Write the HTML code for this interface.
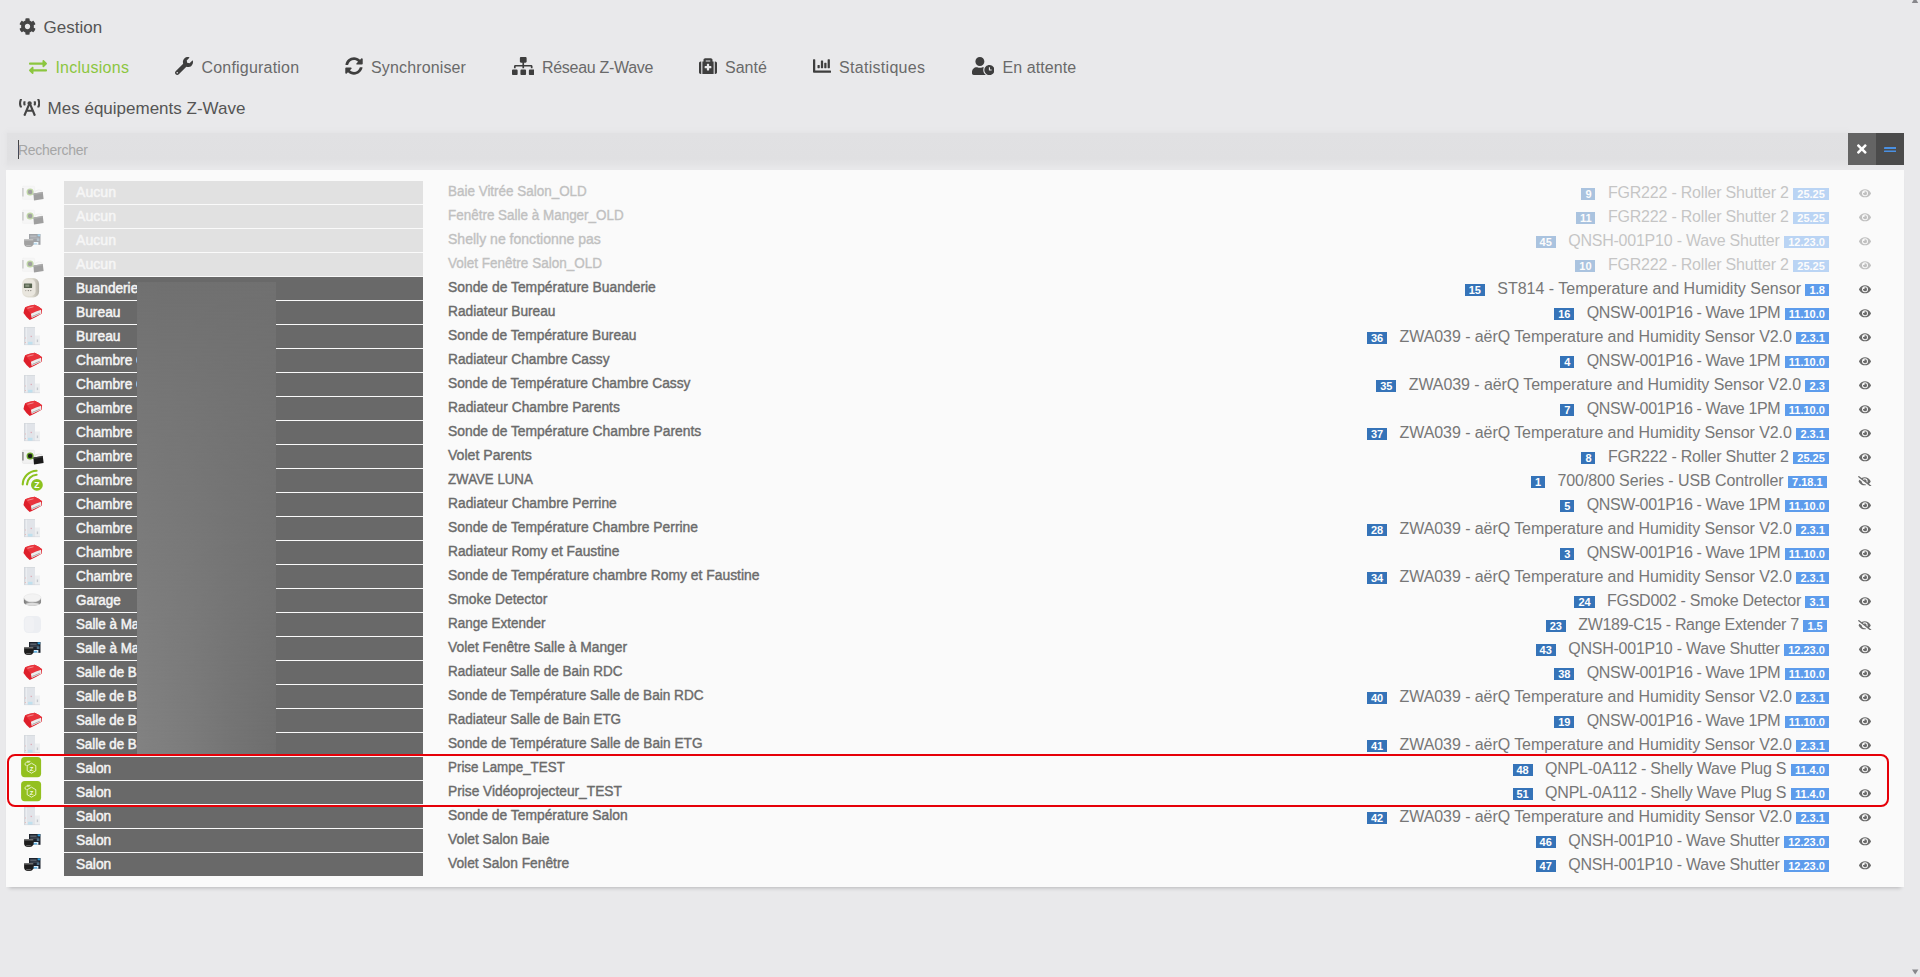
<!DOCTYPE html>
<html lang="fr">
<head>
<meta charset="utf-8">
<title>Z-Wave JS</title>
<style>
*{box-sizing:border-box;margin:0;padding:0}
html,body{width:1920px;height:977px;overflow:hidden}
body{background:#e9e9eb;font-family:"Liberation Sans",sans-serif;color:#555;position:relative}
.abs{position:absolute}
.legend{position:absolute;left:19px;top:16px;height:22px;line-height:22px;font-size:17px;color:#555;white-space:nowrap}
.legend svg{position:absolute;left:0;top:2px;width:17px;height:17px;fill:#454545}
.legend span{position:absolute;left:24.6px;top:1px}
.tab{position:absolute;top:56px;height:22px;line-height:22px;font-size:16px;color:#6a6a6a;white-space:nowrap}
.tab svg{position:absolute;top:1px;fill:#3e3e3e}
.tab span{top:1px}
.tab.act{color:#8cc63f}
.tab.act svg{fill:#8cc63f}
.search{position:absolute;left:7px;top:133px;width:1841px;height:32px;background:linear-gradient(180deg,#e1e1e3 0,#e0e0e2 80%,#e4e4e6 100%);box-shadow:0 0 4px 2px #e4e4e6}
.search span{position:absolute;left:11px;top:1px;line-height:33px;font-size:14px;color:#a6a6a6;letter-spacing:-.27px}
.search i{position:absolute;left:11px;top:7px;width:1px;height:19px;background:#444}
.btn{position:absolute;top:133px;width:28px;height:32px}
.btn svg{position:absolute}
.panel{position:absolute;left:6.2px;top:169.6px;width:1897.8px;height:717px;background:#fafafa;box-shadow:0 4px 4px -3px rgba(0,0,0,.22)}
.row{position:absolute;left:7px;width:1897px;height:24px;white-space:nowrap}
.row .ico{position:absolute;left:13px;top:0}
.row .lab{position:absolute;left:57px;top:1px;width:359px;height:23px;background:#696969;color:#f4f4f4;font-weight:bold;font-size:14px;line-height:22px;padding-left:12px;overflow:hidden}
.row .nm{position:absolute;left:441px;top:0;font-weight:normal;-webkit-text-stroke:.4px;font-size:14px;line-height:22px;color:#6b6b6b;transform:scaleX(.983);transform-origin:0 50%}
.row .rt{position:absolute;right:75px;top:1px;font-size:16px;line-height:24px;color:#777}
.row .nid,.row .ver{display:inline-block;font-size:11px;font-weight:bold;color:#fff;line-height:12.6px;height:12px;padding:0 4.15px;vertical-align:0;letter-spacing:0}
.row .rt.sl{right:77.2px}
.m0{letter-spacing:-0.200px}
.m1{letter-spacing:-0.227px}
.m2{letter-spacing:-0.003px}
.m3{letter-spacing:-0.382px}
.m4{letter-spacing:-0.070px}
.m5{letter-spacing:-0.081px}
.m6{letter-spacing:-0.254px}
.m7{letter-spacing:-0.318px}
.m8{letter-spacing:-0.223px}
.row .nid{background:#3573b8;margin-right:12.4px;padding:0 3.95px}
.row .ver{background:#5d9cec}
.row .eye{position:absolute;left:1852px;top:7.7px;width:12px;height:10.67px;fill:#6b6b6b}
.row .eye[viewBox="0 0 640 512"]{left:1851.3px;width:13.33px}
.row.dis .ico,.row.dis .nm,.row.dis .rt,.row.dis .eye{opacity:.4}
.row .lab b{display:inline-block;font-weight:normal;-webkit-text-stroke:.5px;transform-origin:0 50%}
.row.dis .lab{background:#e1e1e1;color:#f6f6f6}
.redact{position:absolute;left:137px;top:281.5px;width:139px;height:472.5px;background:linear-gradient(180deg,#707070 0%,rgba(114,114,114,.75) 22%,rgba(118,118,118,.4) 65%,rgba(118,118,118,0) 100%),linear-gradient(90deg,#828282 0%,#808080 12%,#7b7b7b 40%,#747474 68%,#6e6e6e 100%)}
.hl{position:absolute;left:7.2px;top:754.3px;width:1882px;height:52.5px;border:2.1px solid #e60008;border-radius:8px}
</style>
</head>
<body>
<svg width="0" height="0" style="position:absolute">
<defs>
<path id="i-eye" d="M572.52 241.4C518.29 135.59 410.93 64 288 64S57.68 135.64 3.48 241.41a32.35 32.35 0 0 0 0 29.19C57.71 376.41 165.07 448 288 448s230.32-71.64 284.52-177.41a32.35 32.35 0 0 0 0-29.19zM288 400a144 144 0 1 1 144-144 143.93 143.93 0 0 1-144 144zm0-240a95.31 95.31 0 0 0-25.31 3.79 47.85 47.85 0 0 1-66.9 66.9A95.78 95.78 0 1 0 288 160z"/>
<path id="i-slash" d="M320 400c-75.85 0-137.25-58.710-142.900-133.110L72.200 185.820c-13.790 17.300-26.480 35.590-36.720 55.590a32.350 32.350 0 0 0 0 29.190C89.710 376.410 197.070 448 320 448c26.910 0 52.870-4 77.890-10.460L346 397.390a144.130 144.130 0 0 1-26 2.610zm313.820 58.100l-110.550-85.440a331.250 331.250 0 0 0 81.250-102.070 32.350 32.350 0 0 0 0-29.190C550.290 135.590 442.930 64 320 64a308.150 308.150 0 0 0-147.320 37.700L45.460 3.370A16 16 0 0 0 23 6.180L3.370 31.450A16 16 0 0 0 6.180 53.900l588.360 454.730a16 16 0 0 0 22.460-2.810l19.640-25.270a16 16 0 0 0-2.820-22.450zm-183.720-142l-39.300-30.380A94.750 94.750 0 0 0 416 256a94.760 94.760 0 0 0-121.310-92.210A47.650 47.650 0 0 1 304 192a46.640 46.640 0 0 1-1.540 10l-73.610-56.890A142.310 142.310 0 0 1 320 112a143.920 143.920 0 0 1 144 144c0 21.630-5.290 41.790-13.900 60.110z"/>
<linearGradient id="g-st" x1="0" x2="1" y1="0" y2="0"><stop offset="0" stop-color="#e6e3da"/><stop offset=".6" stop-color="#dedbd1"/><stop offset="1" stop-color="#b3b0a6"/></linearGradient>
<linearGradient id="g-sm" x1="0" x2="1" y1="0" y2="0"><stop offset="0" stop-color="#7a7a7a"/><stop offset=".35" stop-color="#a9a9a9"/><stop offset="1" stop-color="#8a8a8a"/></linearGradient>
<g id="i-fgr"><rect x="2.4" y="6.2" width="12.2" height="13.2" rx="1.2" fill="#f1f1f1" stroke="#e3e3e3" stroke-width=".6"/><rect x="2.5" y="8" width=".9" height="8.5" fill="#444"/><circle cx="10.1" cy="12" r="2.9" fill="#1b1b1b" stroke="#6aa52a" stroke-width="1.3"/><path d="M14.6 12.6C16 9.5 21 9 22.6 12" fill="none" stroke="#e4e4e4" stroke-width="1.2"/><path d="M13.4 13.6l9.4-1.6.8 7-9.6 1.6z" fill="#1a1a1a"/><path d="M13.4 13.6l9.4-1.6.1 1.2-9.4 1.7z" fill="#3c3c3c"/></g>
<g id="i-shut"><rect x="9" y="6" width="11.5" height="10.8" fill="#1c222c"/><rect x="17.6" y="6.3" width="2.6" height="2" fill="#2f9ad6"/><rect x="10.2" y="7.6" width="6.4" height="1" fill="#7c8590"/><rect x="10.2" y="9.6" width="8.5" height=".9" fill="#56606c"/><rect x="16.8" y="10.4" width="2.6" height="2.6" fill="#4f6f86"/><rect x="13.6" y="14" width="4.8" height="2.8" fill="#d9ecf8"/><rect x="13.6" y="15.2" width="3.4" height="1.2" fill="#46a6de"/><path d="M4.100 11.500h9.300v3.900c0 2-1.600 3.500-3.600 3.500H7.700c-2 0-3.600-1.500-3.600-3.500z" fill="#1d1d1d"/><rect x="4.100" y="11" width="9.300" height="1.500" rx=".5" fill="#707070"/><rect x="6.200" y="17.400" width="4.600" height=".8" fill="#8a8a8a"/></g>
<g id="i-st814"><rect x="2.1" y="2.1" width="17" height="19.3" rx="6" fill="url(#g-st)"/><rect x="3" y="3.400" width="12.500" height="16.500" rx="4.500" fill="#e9e6de"/><rect x="3.9" y="7.5" width="8.2" height="4.5" rx=".5" fill="#57634f"/><rect x="5.300" y="8.600" width="4" height="2.200" fill="#8a9680"/><circle cx="5.800" cy="14.600" r=".6" fill="#9a978f"/><circle cx="8.300" cy="14.600" r=".6" fill="#77746c"/><circle cx="10.800" cy="14.600" r=".6" fill="#77746c"/></g>
<g id="i-red"><path d="M5.200 7.200Q9.500 5.600 14.600 4.800Q19 6.500 22.100 9.300L21.600 13.800Q15.500 17.500 9.700 19.950Q6 17 3.500 13Q4 9.500 5.200 7.200z" fill="#de1f2a"/><path d="M5.200 7.200Q9.500 5.600 14.600 4.800Q19 6.500 22.100 9.300Q16 11 10.900 13.800Q7.500 10 5.200 7.200z" fill="#e9343c"/><path d="M10.900 13.800Q16 11 21.100 9.700L21.100 13.800Q16.500 15.600 11.700 17.900z" fill="#ececec"/><path d="M12.600 16.300l7.800-3.300" stroke="#666" stroke-width=".9" stroke-dasharray="1.100 1"/><path d="M7.500 8.300l6-1.500" stroke="#f7b0b3" stroke-width=".7"/></g>
<g id="i-aerq"><rect x="4.100" y="3" width="10.900" height="18" fill="#e1e4e9"/><rect x="4.100" y="3" width=".8" height="18" fill="#cfd3d9"/><rect x="4.100" y="3" width="10.900" height=".7" fill="#d3d7dc"/><rect x="15" y="11.500" width="4.900" height="9.500" fill="#eceef0"/><rect x="6" y="3.700" width=".7" height="17.300" fill="#f0f2f5"/><rect x="8" y="17.800" width="4.500" height="3.200" fill="#bfe0ee"/><rect x="10.600" y="11.800" width="1.300" height="1.300" fill="#dfa9b4"/><rect x="4.900" y="13.500" width="1" height="1" fill="#e6b9b9"/><rect x="4.900" y="18" width="1" height="1" fill="#e6b9b9"/><rect x="16.800" y="15.500" width="1.300" height="2.600" fill="#c4c8ce"/><rect x="4.100" y="20.500" width="15.800" height=".6" fill="#d5d8dd"/></g>
<g id="i-luna"><path d="M2.700 16.400A14.300 14.300 0 0 1 16.600 2.700" fill="none" stroke="#8dc21f" stroke-width="2.100" stroke-linecap="round"/><path d="M7 16.400A10 10 0 0 1 16.600 6.800" fill="none" stroke="#8dc21f" stroke-width="2.100" stroke-linecap="round"/><circle cx="16.900" cy="16.900" r="5.900" fill="#8dc21f"/><text x="16.900" y="20" font-family="Liberation Sans,sans-serif" font-weight="bold" font-size="8.600" text-anchor="middle" fill="#fff">Z</text></g>
<g id="i-smoke"><ellipse cx="12.450" cy="14" rx="8.600" ry="4" fill="#d9d9d9"/><path d="M3.850 10v4.200c0 2 3.900 3.300 8.600 3.300s8.600-1.300 8.600-3.300V10z" fill="url(#g-sm)"/><ellipse cx="12.450" cy="16.300" rx="7" ry="1.500" fill="#dcdcdc"/><ellipse cx="12.450" cy="9.800" rx="8.600" ry="4" fill="#f3f3f3" stroke="#e2e2e2" stroke-width=".5"/></g>
<g id="i-range"><rect x="3.800" y="4" width="17.200" height="17" rx="4.500" fill="#eceef2"/><rect x="5" y="5" width="9" height="15" rx="3.500" fill="#f0f1f4"/></g>
<g id="i-plug"><rect x="1.100" y="1" width="20" height="20.200" rx="3.600" fill="#93c01f"/><g fill="none" stroke="#f3f9e1" stroke-width=".85"><path d="M11.500 7.200l4.300 2.500v5l-4.300 2.500-4.300-2.500v-5z"/><path d="M9.500 6.200h-3l-1.800 1.600 1.700 2.200M7 5.300h3.400"/></g><text x="11.600" y="14.600" font-family="Liberation Sans,sans-serif" font-weight="bold" font-size="6" text-anchor="middle" fill="#f6fbe8">Z</text></g>
</defs>
</svg>

<div class="legend"><svg viewBox="0 0 512 512"><path d="M487.4 315.7l-42.6-24.6c4.3-23.2 4.3-47 0-70.2l42.6-24.6c4.9-2.8 7.1-8.6 5.5-14-11.1-35.6-30-67.8-54.7-94.600-3.800-4.100-10-5.100-14.800-2.300L380.800 110c-17.900-15.400-38.500-27.300-60.800-35.100V25.800c0-5.600-3.900-10.500-9.400-11.700-36.700-8.200-74.300-7.800-109.200 0-5.500 1.200-9.400 6.100-9.400 11.700V75c-22.200 7.900-42.800 19.800-60.800 35.100L88.700 85.500c-4.900-2.800-11-1.900-14.800 2.300-24.700 26.700-43.600 58.900-54.700 94.600-1.700 5.400.6 11.200 5.500 14L67.300 221c-4.300 23.200-4.300 47 0 70.200l-42.600 24.600c-4.900 2.800-7.100 8.600-5.500 14 11.100 35.600 30 67.800 54.700 94.600 3.800 4.100 10 5.100 14.800 2.300l42.600-24.600c17.900 15.400 38.500 27.300 60.800 35.100v49.200c0 5.600 3.900 10.500 9.400 11.700 36.700 8.200 74.300 7.800 109.200 0 5.500-1.200 9.400-6.100 9.400-11.700v-49.200c22.200-7.900 42.800-19.800 60.800-35.100l42.600 24.600c4.900 2.800 11 1.900 14.800-2.300 24.700-26.700 43.600-58.900 54.700-94.600 1.500-5.500-.7-11.300-5.600-14.100zM256 336c-44.100 0-80-35.900-80-80s35.900-80 80-80 80 35.900 80 80-35.900 80-80 80z"/></svg><span>Gestion</span></div>

<div class="tab act" style="left:28px"><svg viewBox="0 0 512 512" style="left:.8px;top:1.6px;width:18.0px;height:18px" fill-rule="evenodd"><path d="M0 168v-16c0-13.255 10.745-24 24-24h360V80c0-21.367 25.899-32.042 40.971-16.971l80 80c9.372 9.373 9.372 24.569 0 33.941l-80 80C409.956 271.982 384 261.456 384 240v-48H24c-13.255 0-24-10.745-24-24zm488 152H128v-48c0-21.314-25.862-32.08-40.971-16.971l-80 80c-9.372 9.373-9.372 24.569 0 33.941l80 80C102.057 463.997 128 453.437 128 432v-48h360c13.255 0 24-10.745 24-24v-16c0-13.255-10.745-24-24-24z"/></svg><span style="position:absolute;left:27.4px;letter-spacing:0.26px">Inclusions</span></div>
<div class="tab " style="left:175px"><svg viewBox="0 0 512 512" style="left:0;width:18.0px;height:18px" fill-rule="evenodd"><path d="M507.73 109.1c-2.24-9.03-13.54-12.09-20.12-5.51l-74.36 74.36-67.88-11.31-11.31-67.88 74.36-74.36c6.62-6.62 3.43-17.9-5.66-20.16-47.38-11.74-99.55.91-136.58 37.93-39.64 39.64-50.55 97.1-34.05 147.2L18.74 402.760c-24.990 24.990-24.990 65.510 0 90.500 24.990 24.990 65.510 24.990 90.500 0l213.210-213.210c50.120 16.710 107.470 5.680 147.370-34.220 37.070-37.070 49.700-89.320 37.910-136.730zM64 472c-13.250 0-24-10.750-24-24 0-13.260 10.750-24 24-24s24 10.740 24 24c0 13.250-10.750 24-24 24z"/></svg><span style="position:absolute;left:26.5px;letter-spacing:0.2px">Configuration</span></div>
<div class="tab " style="left:344.5px"><svg viewBox="0 0 512 512" style="left:0;width:18.0px;height:18px" fill-rule="evenodd"><path d="M370.72 133.28C339.458 104.008 298.888 87.962 255.848 88c-77.458.068-144.328 53.178-162.791 126.85-1.344 5.363-6.122 9.15-11.651 9.15H24.103c-7.498 0-13.194-6.807-11.807-14.176C33.933 94.924 134.813 8 256 8c66.448 0 126.791 26.136 171.315 68.685L463.03 40.97C478.149 25.851 504 36.559 504 57.941V192c0 13.255-10.745 24-24 24H345.941c-21.382 0-32.09-25.851-16.971-40.971l41.75-41.749zM32 296h134.059c21.382 0 32.09 25.851 16.971 40.971l-41.75 41.75c31.262 29.273 71.835 45.319 114.876 45.28 77.418-.07 144.315-53.144 162.787-126.849 1.344-5.363 6.122-9.15 11.651-9.15h57.304c7.498 0 13.194 6.807 11.807 14.176C478.067 417.076 377.187 504 256 504c-66.448 0-126.791-26.136-171.315-68.685L48.97 471.03C33.851 486.149 8 475.441 8 454.059V320c0-13.255 10.745-24 24-24z"/></svg><span style="position:absolute;left:26.5px;letter-spacing:0.14px">Synchroniser</span></div>
<div class="tab " style="left:511.5px"><svg viewBox="0 0 640 512" style="left:0;width:22.5px;height:18px" fill-rule="evenodd"><path d="M128 352H32c-17.67 0-32 14.33-32 32v96c0 17.67 14.33 32 32 32h96c17.67 0 32-14.33 32-32v-96c0-17.67-14.33-32-32-32zm-24-80h192v48h48v-48h192v48h48v-57.59c0-21.17-17.23-38.41-38.41-38.41H344v-64h40c17.67 0 32-14.33 32-32V32c0-17.67-14.33-32-32-32H256c-17.67 0-32 14.33-32 32v96c0 17.67 14.33 32 32 32h40v64H94.41C73.23 224 56 241.23 56 262.41V320h48v-48zm264 80h-96c-17.67 0-32 14.33-32 32v96c0 17.67 14.33 32 32 32h96c17.67 0 32-14.33 32-32v-96c0-17.670-14.330-32-32-32zm240 0h-96c-17.670 0-32 14.330-32 32v96c0 17.670 14.330 32 32 32h96c17.670 0 32-14.330 32-32v-96c0-17.670-14.330-32-32-32z"/></svg><span style="position:absolute;left:30.5px;letter-spacing:-0.3px">Réseau Z-Wave</span></div>
<div class="tab " style="left:698.5px"><svg viewBox="0 0 512 512" style="left:0;width:18.0px;height:18px" fill-rule="evenodd"><path d="M96 480h320V128h-32V80c0-26.51-21.49-48-48-48H176c-26.51 0-48 21.49-48 48v48H96v352zm96-384h128v32H192V96zm320 80v256c0 26.51-21.49 48-48 48h-16V128h16c26.51 0 48 21.49 48 48zM64 480H48c-26.51 0-48-21.49-48-48V176c0-26.51 21.49-48 48-48h16v352zm288-208v32c0 8.837-7.163 16-16 16h-48v48c0 8.837-7.163 16-16 16h-32c-8.837 0-16-7.163-16-16v-48h-48c-8.837 0-16-7.163-16-16v-32c0-8.837 7.163-16 16-16h48v-48c0-8.837 7.163-16 16-16h32c8.837 0 16 7.163 16 16v48h48c8.837 0 16 7.163 16 16z"/></svg><span style="position:absolute;left:26.5px;letter-spacing:0px">Santé</span></div>
<div class="tab " style="left:812.5px"><svg viewBox="0 0 512 512" style="left:0;width:18.0px;height:18px" fill-rule="evenodd"><path d="M332.8 320h38.4c6.4 0 12.8-6.4 12.8-12.8V172.8c0-6.4-6.4-12.8-12.8-12.8h-38.4c-6.4 0-12.8 6.4-12.8 12.8v134.4c0 6.4 6.4 12.8 12.8 12.8zm96 0h38.4c6.4 0 12.8-6.4 12.8-12.8V76.8c0-6.4-6.4-12.8-12.8-12.8h-38.4c-6.4 0-12.8 6.4-12.8 12.8v230.4c0 6.4 6.4 12.8 12.8 12.8zm-288 0h38.4c6.4 0 12.8-6.4 12.8-12.8v-70.4c0-6.4-6.4-12.8-12.8-12.8h-38.4c-6.4 0-12.8 6.4-12.8 12.8v70.4c0 6.4 6.4 12.8 12.8 12.8zm96 0h38.4c6.4 0 12.8-6.4 12.8-12.8V108.8c0-6.4-6.4-12.8-12.8-12.8h-38.4c-6.4 0-12.8 6.4-12.8 12.8v198.4c0 6.4 6.4 12.8 12.8 12.8zM496 384H64V80c0-8.84-7.16-16-16-16H16C7.16 64 0 71.16 0 80v336c0 17.67 14.33 32 32 32h464c8.840 0 16-7.160 16-16v-32c0-8.840-7.160-16-16-16z"/></svg><span style="position:absolute;left:26.5px;letter-spacing:0.3px">Statistiques</span></div>
<div class="tab " style="left:971.5px"><svg viewBox="0 0 640 512" style="left:0;width:22.5px;height:18px" fill-rule="evenodd"><path d="M496 224c-79.6 0-144 64.4-144 144s64.4 144 144 144 144-64.4 144-144-64.4-144-144-144zm64 150.3c0 5.3-4.4 9.7-9.7 9.700h-60.600c-5.300 0-9.700-4.400-9.700-9.700v-76.600c0-5.300 4.400-9.700 9.700-9.700h12.600c5.300 0 9.700 4.400 9.700 9.700V352h38.300c5.300 0 9.700 4.400 9.700 9.700v12.600zM320 368c0-27.800 6.700-54.100 18.200-77.500-8-1.500-16.200-2.500-24.600-2.500h-16.700c-22.200 10.200-46.900 16-72.900 16s-50.600-5.800-72.900-16h-16.700C60.200 288 0 348.200 0 422.400V464c0 26.500 21.500 48 48 48h347.100c-45.300-31.900-75.100-84.500-75.100-144zm-96-112c70.700 0 128-57.300 128-128S294.700 0 224 0 96 57.300 96 128s57.300 128 128 128z"/></svg><span style="position:absolute;left:31.0px;letter-spacing:0.07px">En attente</span></div>

<div class="legend" style="top:97px"><svg viewBox="0 0 640 512" style="left:0;top:2px;width:21.25px;height:17px" fill-rule="evenodd"><path d="M150.94 192h33.73c11.01 0 18.61-10.83 14.86-21.18-4.93-13.58-7.55-27.98-7.55-42.82s2.62-29.24 7.55-42.82C203.29 74.83 195.68 64 184.67 64h-33.73c-7.01 0-13.46 4.49-15.41 11.23C130.64 92.21 128 109.88 128 128c0 18.12 2.64 35.79 7.54 52.76 1.94 6.74 8.39 11.24 15.4 11.24zM89.92 23.34C95.56 12.72 87.97 0 75.96 0H40.63c-6.27 0-12.14 3.59-14.74 9.31C9.4 45.54 0 85.65 0 128c0 24.75 3.12 68.33 26.69 118.86 2.62 5.63 8.42 9.14 14.61 9.14h34.84c12.02 0 19.61-12.74 13.95-23.37-49.78-93.32-16.71-178.15-.17-209.29zM614.06 9.29C611.46 3.58 605.6 0 599.33 0h-35.42c-11.98 0-19.66 12.66-14.02 23.25 18.27 34.29 48.42 119.42.28 209.23-5.72 10.68 1.8 23.52 13.91 23.52h35.23c6.27 0 12.13-3.58 14.73-9.29C630.57 210.48 640 170.36 640 128s-9.42-82.48-25.94-118.71zM489.06 64h-33.73c-11.01 0-18.61 10.83-14.86 21.18 4.93 13.58 7.55 27.98 7.55 42.82s-2.62 29.24-7.55 42.82c-3.76 10.35 3.85 21.18 14.86 21.18h33.73c7.02 0 13.46-4.49 15.41-11.24 4.9-16.97 7.53-34.64 7.53-52.76 0-18.12-2.64-35.79-7.54-52.76-1.94-6.75-8.39-11.24-15.400-11.24zm-116.300 100.120c7.050-10.290 11.200-22.710 11.200-36.120 0-35.350-28.630-64-63.960-64-35.320 0-63.960 28.650-63.960 64 0 13.410 4.150 25.830 11.200 36.120l-130.500 313.410c-3.400 8.150.460 17.520 8.610 20.920l29.510 12.310c8.150 3.400 17.520-.460 20.910-8.610L244.960 384h150.070l49.200 118.150c3.400 8.160 12.760 12.010 20.910 8.610l29.510-12.310c8.150-3.400 12-12.770 8.610-20.920l-130.500-313.410zM271.620 320L320 203.810 368.380 320h-96.760z"/></svg><span style="left:28.6px">Mes équipements Z-Wave</span></div>

<div class="search"><i></i><span>Rechercher</span></div>
<div class="btn" style="left:1848px;background:#646464"><svg style="left:9.2px;top:9.4px;width:9.625px;height:14px;fill:#fff" viewBox="0 0 352 512"><path d="M242.72 256l100.07-100.07c12.28-12.28 12.28-32.19 0-44.480l-22.240-22.240c-12.280-12.280-32.190-12.280-44.480 0L176 189.280 75.930 89.210c-12.280-12.280-32.190-12.280-44.480 0L9.210 111.450c-12.280 12.280-12.280 32.190 0 44.480L109.280 256 9.210 356.070c-12.280 12.280-12.280 32.190 0 44.480l22.240 22.240c12.280 12.280 32.200 12.280 44.480 0L176 322.720l100.070 100.070c12.280 12.280 32.200 12.280 44.480 0l22.240-22.240c12.280-12.280 12.280-32.190 0-44.480L242.720 256z"/></svg></div>
<div class="btn" style="left:1876px;background:#4b4b4b"><svg style="left:7.6px;top:13.8px;width:12.5px;height:5.4px;fill:#4a90e2" viewBox="0 0 12.5 5.4"><rect x="0" y="0" width="12.5" height="2" rx=".4"/><rect x="0" y="3.4" width="12.5" height="2" rx=".4"/></svg></div>

<svg class="abs" style="left:1908px;top:0;width:12px;height:977px" viewBox="0 0 12 977"><path d="M7-2.500l3.200 5.500H3.800z" fill="#87878b"/><path d="M4 969.600h6.400L7.200 974.500z" fill="#87878b"/></svg>
<div class="panel"></div>
<div class="row dis" style="top:180px">
<svg class="ico" width="24" height="24" viewBox="0 0 24 24"><use href="#i-fgr"/></svg>
<span class="lab"><b style="transform:scaleX(1.007)">Aucun</b></span>
<span class="nm" style="transform:scaleX(0.9606)">Baie Vitrée Salon_OLD</span>
<span class="rt"><span class="nid">9</span><span class="mdl m0">FGR222 - Roller Shutter 2</span> <span class="ver">25.25</span></span>
<svg class="eye" viewBox="0 0 576 512"><use href="#i-eye"/></svg>
</div>
<div class="row dis" style="top:204px">
<svg class="ico" width="24" height="24" viewBox="0 0 24 24"><use href="#i-fgr"/></svg>
<span class="lab"><b style="transform:scaleX(1.007)">Aucun</b></span>
<span class="nm" style="transform:scaleX(0.9608)">Fenêtre Salle à Manger_OLD</span>
<span class="rt"><span class="nid">11</span><span class="mdl m0">FGR222 - Roller Shutter 2</span> <span class="ver">25.25</span></span>
<svg class="eye" viewBox="0 0 576 512"><use href="#i-eye"/></svg>
</div>
<div class="row dis" style="top:228px">
<svg class="ico" width="24" height="24" viewBox="0 0 24 24"><use href="#i-shut"/></svg>
<span class="lab"><b style="transform:scaleX(1.007)">Aucun</b></span>
<span class="nm" style="transform:scaleX(1.0022)">Shelly ne fonctionne pas</span>
<span class="rt"><span class="nid">45</span><span class="mdl m1">QNSH-001P10 - Wave Shutter</span> <span class="ver">12.23.0</span></span>
<svg class="eye" viewBox="0 0 576 512"><use href="#i-eye"/></svg>
</div>
<div class="row dis" style="top:252px">
<svg class="ico" width="24" height="24" viewBox="0 0 24 24"><use href="#i-fgr"/></svg>
<span class="lab"><b style="transform:scaleX(1.007)">Aucun</b></span>
<span class="nm" style="transform:scaleX(0.9652)">Volet Fenêtre Salon_OLD</span>
<span class="rt"><span class="nid">10</span><span class="mdl m0">FGR222 - Roller Shutter 2</span> <span class="ver">25.25</span></span>
<svg class="eye" viewBox="0 0 576 512"><use href="#i-eye"/></svg>
</div>
<div class="row" style="top:276px">
<svg class="ico" width="24" height="24" viewBox="0 0 24 24"><use href="#i-st814"/></svg>
<span class="lab"><b style="transform:scaleX(0.975)">Buanderie</b></span>
<span class="nm" style="transform:scaleX(0.9900)">Sonde de Température Buanderie</span>
<span class="rt"><span class="nid">15</span><span class="mdl m2">ST814 - Temperature and Humidity Sensor</span> <span class="ver">1.8</span></span>
<svg class="eye" viewBox="0 0 576 512"><use href="#i-eye"/></svg>
</div>
<div class="row" style="top:300px">
<svg class="ico" width="24" height="24" viewBox="0 0 24 24"><use href="#i-red"/></svg>
<span class="lab"><b style="transform:scaleX(0.985)">Bureau</b></span>
<span class="nm" style="transform:scaleX(0.9795)">Radiateur Bureau</span>
<span class="rt"><span class="nid">16</span><span class="mdl m3">QNSW-001P16 - Wave 1PM</span> <span class="ver">11.10.0</span></span>
<svg class="eye" viewBox="0 0 576 512"><use href="#i-eye"/></svg>
</div>
<div class="row" style="top:324px">
<svg class="ico" width="24" height="24" viewBox="0 0 24 24"><use href="#i-aerq"/></svg>
<span class="lab"><b style="transform:scaleX(0.985)">Bureau</b></span>
<span class="nm" style="transform:scaleX(0.9858)">Sonde de Température Bureau</span>
<span class="rt"><span class="nid">36</span><span class="mdl m4">ZWA039 - aërQ Temperature and Humidity Sensor V2.0</span> <span class="ver">2.3.1</span></span>
<svg class="eye" viewBox="0 0 576 512"><use href="#i-eye"/></svg>
</div>
<div class="row" style="top:348px">
<svg class="ico" width="24" height="24" viewBox="0 0 24 24"><use href="#i-red"/></svg>
<span class="lab"><b style="transform:scaleX(0.977)">Chambre Cassy</b></span>
<span class="nm" style="transform:scaleX(0.9790)">Radiateur Chambre Cassy</span>
<span class="rt"><span class="nid">4</span><span class="mdl m3">QNSW-001P16 - Wave 1PM</span> <span class="ver">11.10.0</span></span>
<svg class="eye" viewBox="0 0 576 512"><use href="#i-eye"/></svg>
</div>
<div class="row" style="top:372px">
<svg class="ico" width="24" height="24" viewBox="0 0 24 24"><use href="#i-aerq"/></svg>
<span class="lab"><b style="transform:scaleX(0.977)">Chambre Cassy</b></span>
<span class="nm" style="transform:scaleX(0.9840)">Sonde de Température Chambre Cassy</span>
<span class="rt"><span class="nid">35</span><span class="mdl m4">ZWA039 - aërQ Temperature and Humidity Sensor V2.0</span> <span class="ver">2.3</span></span>
<svg class="eye" viewBox="0 0 576 512"><use href="#i-eye"/></svg>
</div>
<div class="row" style="top:396px">
<svg class="ico" width="24" height="24" viewBox="0 0 24 24"><use href="#i-red"/></svg>
<span class="lab"><b style="transform:scaleX(0.977)">Chambre</b></span>
<span class="nm" style="transform:scaleX(0.9856)">Radiateur Chambre Parents</span>
<span class="rt"><span class="nid">7</span><span class="mdl m3">QNSW-001P16 - Wave 1PM</span> <span class="ver">11.10.0</span></span>
<svg class="eye" viewBox="0 0 576 512"><use href="#i-eye"/></svg>
</div>
<div class="row" style="top:420px">
<svg class="ico" width="24" height="24" viewBox="0 0 24 24"><use href="#i-aerq"/></svg>
<span class="lab"><b style="transform:scaleX(0.977)">Chambre</b></span>
<span class="nm" style="transform:scaleX(0.9899)">Sonde de Température Chambre Parents</span>
<span class="rt"><span class="nid">37</span><span class="mdl m4">ZWA039 - aërQ Temperature and Humidity Sensor V2.0</span> <span class="ver">2.3.1</span></span>
<svg class="eye" viewBox="0 0 576 512"><use href="#i-eye"/></svg>
</div>
<div class="row" style="top:444px">
<svg class="ico" width="24" height="24" viewBox="0 0 24 24"><use href="#i-fgr"/></svg>
<span class="lab"><b style="transform:scaleX(0.977)">Chambre</b></span>
<span class="nm" style="transform:scaleX(1.0068)">Volet Parents</span>
<span class="rt"><span class="nid">8</span><span class="mdl m0">FGR222 - Roller Shutter 2</span> <span class="ver">25.25</span></span>
<svg class="eye" viewBox="0 0 576 512"><use href="#i-eye"/></svg>
</div>
<div class="row" style="top:468px">
<svg class="ico" width="24" height="24" viewBox="0 0 24 24"><use href="#i-luna"/></svg>
<span class="lab"><b style="transform:scaleX(0.977)">Chambre</b></span>
<span class="nm" style="transform:scaleX(0.9478)">ZWAVE LUNA</span>
<span class="rt sl"><span class="nid">1</span><span class="mdl m5">700/800 Series - USB Controller</span> <span class="ver">7.18.1</span></span>
<svg class="eye" viewBox="0 0 640 512"><use href="#i-slash"/></svg>
</div>
<div class="row" style="top:492px">
<svg class="ico" width="24" height="24" viewBox="0 0 24 24"><use href="#i-red"/></svg>
<span class="lab"><b style="transform:scaleX(0.977)">Chambre</b></span>
<span class="nm" style="transform:scaleX(0.9860)">Radiateur Chambre Perrine</span>
<span class="rt"><span class="nid">5</span><span class="mdl m3">QNSW-001P16 - Wave 1PM</span> <span class="ver">11.10.0</span></span>
<svg class="eye" viewBox="0 0 576 512"><use href="#i-eye"/></svg>
</div>
<div class="row" style="top:516px">
<svg class="ico" width="24" height="24" viewBox="0 0 24 24"><use href="#i-aerq"/></svg>
<span class="lab"><b style="transform:scaleX(0.977)">Chambre</b></span>
<span class="nm" style="transform:scaleX(0.9894)">Sonde de Température Chambre Perrine</span>
<span class="rt"><span class="nid">28</span><span class="mdl m4">ZWA039 - aërQ Temperature and Humidity Sensor V2.0</span> <span class="ver">2.3.1</span></span>
<svg class="eye" viewBox="0 0 576 512"><use href="#i-eye"/></svg>
</div>
<div class="row" style="top:540px">
<svg class="ico" width="24" height="24" viewBox="0 0 24 24"><use href="#i-red"/></svg>
<span class="lab"><b style="transform:scaleX(0.977)">Chambre</b></span>
<span class="nm" style="transform:scaleX(0.9833)">Radiateur Romy et Faustine</span>
<span class="rt"><span class="nid">3</span><span class="mdl m3">QNSW-001P16 - Wave 1PM</span> <span class="ver">11.10.0</span></span>
<svg class="eye" viewBox="0 0 576 512"><use href="#i-eye"/></svg>
</div>
<div class="row" style="top:564px">
<svg class="ico" width="24" height="24" viewBox="0 0 24 24"><use href="#i-aerq"/></svg>
<span class="lab"><b style="transform:scaleX(0.977)">Chambre</b></span>
<span class="nm" style="transform:scaleX(0.9916)">Sonde de Température chambre Romy et Faustine</span>
<span class="rt"><span class="nid">34</span><span class="mdl m4">ZWA039 - aërQ Temperature and Humidity Sensor V2.0</span> <span class="ver">2.3.1</span></span>
<svg class="eye" viewBox="0 0 576 512"><use href="#i-eye"/></svg>
</div>
<div class="row" style="top:588px">
<svg class="ico" width="24" height="24" viewBox="0 0 24 24"><use href="#i-smoke"/></svg>
<span class="lab"><b style="transform:scaleX(0.958)">Garage</b></span>
<span class="nm" style="transform:scaleX(0.9903)">Smoke Detector</span>
<span class="rt"><span class="nid">24</span><span class="mdl m6">FGSD002 - Smoke Detector</span> <span class="ver">3.1</span></span>
<svg class="eye" viewBox="0 0 576 512"><use href="#i-eye"/></svg>
</div>
<div class="row" style="top:612px">
<svg class="ico" width="24" height="24" viewBox="0 0 24 24"><use href="#i-range"/></svg>
<span class="lab"><b style="transform:scaleX(0.957)">Salle à Manger</b></span>
<span class="nm" style="transform:scaleX(0.9636)">Range Extender</span>
<span class="rt sl"><span class="nid">23</span><span class="mdl m7">ZW189-C15 - Range Extender 7</span> <span class="ver">1.5</span></span>
<svg class="eye" viewBox="0 0 640 512"><use href="#i-slash"/></svg>
</div>
<div class="row" style="top:636px">
<svg class="ico" width="24" height="24" viewBox="0 0 24 24"><use href="#i-shut"/></svg>
<span class="lab"><b style="transform:scaleX(0.957)">Salle à Manger</b></span>
<span class="nm" style="transform:scaleX(0.9876)">Volet Fenêtre Salle à Manger</span>
<span class="rt"><span class="nid">43</span><span class="mdl m1">QNSH-001P10 - Wave Shutter</span> <span class="ver">12.23.0</span></span>
<svg class="eye" viewBox="0 0 576 512"><use href="#i-eye"/></svg>
</div>
<div class="row" style="top:660px">
<svg class="ico" width="24" height="24" viewBox="0 0 24 24"><use href="#i-red"/></svg>
<span class="lab"><b style="transform:scaleX(0.95)">Salle de Bain</b></span>
<span class="nm" style="transform:scaleX(0.9618)">Radiateur Salle de Bain RDC</span>
<span class="rt"><span class="nid">38</span><span class="mdl m3">QNSW-001P16 - Wave 1PM</span> <span class="ver">11.10.0</span></span>
<svg class="eye" viewBox="0 0 576 512"><use href="#i-eye"/></svg>
</div>
<div class="row" style="top:684px">
<svg class="ico" width="24" height="24" viewBox="0 0 24 24"><use href="#i-aerq"/></svg>
<span class="lab"><b style="transform:scaleX(0.95)">Salle de Bain</b></span>
<span class="nm" style="transform:scaleX(0.9726)">Sonde de Température Salle de Bain RDC</span>
<span class="rt"><span class="nid">40</span><span class="mdl m4">ZWA039 - aërQ Temperature and Humidity Sensor V2.0</span> <span class="ver">2.3.1</span></span>
<svg class="eye" viewBox="0 0 576 512"><use href="#i-eye"/></svg>
</div>
<div class="row" style="top:708px">
<svg class="ico" width="24" height="24" viewBox="0 0 24 24"><use href="#i-red"/></svg>
<span class="lab"><b style="transform:scaleX(0.95)">Salle de Bain</b></span>
<span class="nm" style="transform:scaleX(0.9629)">Radiateur Salle de Bain ETG</span>
<span class="rt"><span class="nid">19</span><span class="mdl m3">QNSW-001P16 - Wave 1PM</span> <span class="ver">11.10.0</span></span>
<svg class="eye" viewBox="0 0 576 512"><use href="#i-eye"/></svg>
</div>
<div class="row" style="top:732px">
<svg class="ico" width="24" height="24" viewBox="0 0 24 24"><use href="#i-aerq"/></svg>
<span class="lab"><b style="transform:scaleX(0.95)">Salle de Bain</b></span>
<span class="nm" style="transform:scaleX(0.9742)">Sonde de Température Salle de Bain ETG</span>
<span class="rt"><span class="nid">41</span><span class="mdl m4">ZWA039 - aërQ Temperature and Humidity Sensor V2.0</span> <span class="ver">2.3.1</span></span>
<svg class="eye" viewBox="0 0 576 512"><use href="#i-eye"/></svg>
</div>
<div class="row" style="top:756px">
<svg class="ico" width="24" height="24" viewBox="0 0 24 24"><use href="#i-plug"/></svg>
<span class="lab"><b style="transform:scaleX(0.984)">Salon</b></span>
<span class="nm" style="transform:scaleX(0.9564)">Prise Lampe_TEST</span>
<span class="rt"><span class="nid">48</span><span class="mdl m8">QNPL-0A112 - Shelly Wave Plug S</span> <span class="ver">11.4.0</span></span>
<svg class="eye" viewBox="0 0 576 512"><use href="#i-eye"/></svg>
</div>
<div class="row" style="top:780px">
<svg class="ico" width="24" height="24" viewBox="0 0 24 24"><use href="#i-plug"/></svg>
<span class="lab"><b style="transform:scaleX(0.984)">Salon</b></span>
<span class="nm" style="transform:scaleX(0.9813)">Prise Vidéoprojecteur_TEST</span>
<span class="rt"><span class="nid">51</span><span class="mdl m8">QNPL-0A112 - Shelly Wave Plug S</span> <span class="ver">11.4.0</span></span>
<svg class="eye" viewBox="0 0 576 512"><use href="#i-eye"/></svg>
</div>
<div class="row" style="top:804px">
<svg class="ico" width="24" height="24" viewBox="0 0 24 24"><use href="#i-aerq"/></svg>
<span class="lab"><b style="transform:scaleX(0.984)">Salon</b></span>
<span class="nm" style="transform:scaleX(0.9880)">Sonde de Température Salon</span>
<span class="rt"><span class="nid">42</span><span class="mdl m4">ZWA039 - aërQ Temperature and Humidity Sensor V2.0</span> <span class="ver">2.3.1</span></span>
<svg class="eye" viewBox="0 0 576 512"><use href="#i-eye"/></svg>
</div>
<div class="row" style="top:828px">
<svg class="ico" width="24" height="24" viewBox="0 0 24 24"><use href="#i-shut"/></svg>
<span class="lab"><b style="transform:scaleX(0.984)">Salon</b></span>
<span class="nm" style="transform:scaleX(0.9878)">Volet Salon Baie</span>
<span class="rt"><span class="nid">46</span><span class="mdl m1">QNSH-001P10 - Wave Shutter</span> <span class="ver">12.23.0</span></span>
<svg class="eye" viewBox="0 0 576 512"><use href="#i-eye"/></svg>
</div>
<div class="row" style="top:852px">
<svg class="ico" width="24" height="24" viewBox="0 0 24 24"><use href="#i-shut"/></svg>
<span class="lab"><b style="transform:scaleX(0.984)">Salon</b></span>
<span class="nm" style="transform:scaleX(0.9855)">Volet Salon Fenêtre</span>
<span class="rt"><span class="nid">47</span><span class="mdl m1">QNSH-001P10 - Wave Shutter</span> <span class="ver">12.23.0</span></span>
<svg class="eye" viewBox="0 0 576 512"><use href="#i-eye"/></svg>
</div>
<div class="redact"></div>
<div class="hl"></div>
</body>
</html>
